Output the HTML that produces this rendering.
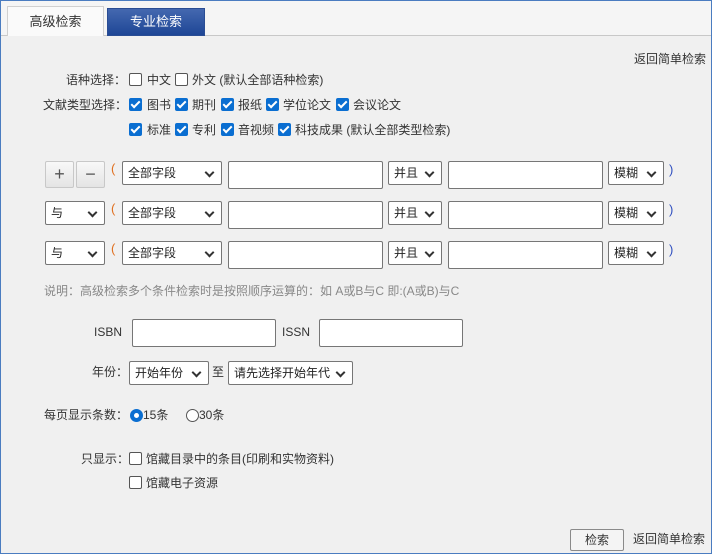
<!DOCTYPE html>
<html><head><meta charset="utf-8"><style>
*{box-sizing:border-box;margin:0;padding:0}
body{width:712px;height:554px;overflow:hidden;background:#fff;font-family:"Liberation Sans","Noto Sans CJK SC",sans-serif;font-size:12px;color:#333}
#f{position:absolute;left:0;top:0;width:712px;height:554px;background:#f0f0f0}
#bd{position:absolute;left:0;top:0;width:712px;height:554px;border:1px solid #4a7cc0;z-index:5;pointer-events:none}
#hd{position:absolute;left:0;top:0;width:712px;height:36px;background:#f5f5f5;border-bottom:1px solid #c8c8c8}
.a{position:absolute;white-space:nowrap;line-height:14px}
.t1{position:absolute;left:7px;top:6px;width:97px;height:30px;background:#fafafa;border:1px solid #d0d0d0;border-bottom:none;text-align:center;line-height:30px;font-size:13px;color:#333}
.t2{position:absolute;left:107px;top:8px;width:98px;height:28px;background:linear-gradient(#4468b0,#1e4696);border:1px solid #2a4d94;text-align:center;line-height:26px;font-size:13px;color:#fff}
.cb{position:absolute;width:13px;height:13px;border:1px solid #555;border-radius:2px;background:#fff}
.ck{position:absolute;width:13px;height:13px;border-radius:2px;background:#0a6ed1}
.ck:after{content:"";position:absolute;left:4px;top:1px;width:3px;height:7px;border:solid #fff;border-width:0 2px 2px 0;transform:rotate(45deg)}
.sel{position:absolute;height:24px;border:1px solid #767676;border-radius:2px;background:#fff;padding-left:5px;line-height:22px;font-size:12px;color:#222}
.sel:after{content:"";position:absolute;right:8px;top:7px;width:5px;height:5px;border:solid #333;border-width:0 2px 2px 0;transform:rotate(45deg)}
.in{position:absolute;height:28px;border:1px solid #767676;border-radius:2px;background:#fff}
.btn{position:absolute;width:29px;height:27px;border:1px solid #c8c8c8;border-radius:2px;background:linear-gradient(#f8f8f8,#e4e4e4);text-align:center;line-height:25px;font-size:18px;color:#555}
.po{position:absolute;color:#e07020;font-size:13px}
.pc{position:absolute;color:#3050c0;font-size:13px}
.rd{position:absolute;width:13px;height:13px;border:1px solid #555;border-radius:50%;background:#fff}
</style></head><body><div id="f">
<div id="hd"></div><div id="bd"></div>
<div class="t1">高级检索</div><div class="t2">专业检索</div>
<div class="a" style="right:6px;top:52px">返回简单检索</div>

<div class="a" style="left:66px;top:73px">语种选择：</div>
<div class="cb" style="left:129px;top:73px"></div><div class="a" style="left:147px;top:73px">中文</div>
<div class="cb" style="left:175px;top:73px"></div><div class="a" style="left:192px;top:73px">外文 (默认全部语种检索)</div>

<div class="a" style="left:43px;top:98px">文献类型选择：</div>
<div class="ck" style="left:129px;top:98px"></div><div class="a" style="left:147px;top:98px">图书</div>
<div class="ck" style="left:175px;top:98px"></div><div class="a" style="left:192px;top:98px">期刊</div>
<div class="ck" style="left:221px;top:98px"></div><div class="a" style="left:238px;top:98px">报纸</div>
<div class="ck" style="left:266px;top:98px"></div><div class="a" style="left:283px;top:98px">学位论文</div>
<div class="ck" style="left:336px;top:98px"></div><div class="a" style="left:353px;top:98px">会议论文</div>

<div class="ck" style="left:129px;top:123px"></div><div class="a" style="left:147px;top:123px">标准</div>
<div class="ck" style="left:175px;top:123px"></div><div class="a" style="left:192px;top:123px">专利</div>
<div class="ck" style="left:221px;top:123px"></div><div class="a" style="left:238px;top:123px">音视频</div>
<div class="ck" style="left:278px;top:123px"></div><div class="a" style="left:295px;top:123px">科技成果 (默认全部类型检索)</div>

<div class="btn" style="left:45px;top:161px">+</div><div class="btn" style="left:76px;top:161px">−</div>
<div class="sel" style="left:45px;top:201px;width:60px">与</div>
<div class="sel" style="left:45px;top:241px;width:60px">与</div>

<div class="po" style="left:111px;top:161px">(</div><div class="po" style="left:111px;top:201px">(</div><div class="po" style="left:111px;top:241px">(</div>
<div class="sel" style="left:122px;top:161px;width:100px">全部字段</div>
<div class="sel" style="left:122px;top:201px;width:100px">全部字段</div>
<div class="sel" style="left:122px;top:241px;width:100px">全部字段</div>
<div class="in" style="left:228px;top:161px;width:155px"></div>
<div class="in" style="left:228px;top:201px;width:155px"></div>
<div class="in" style="left:228px;top:241px;width:155px"></div>
<div class="sel" style="left:388px;top:161px;width:54px">并且</div>
<div class="sel" style="left:388px;top:201px;width:54px">并且</div>
<div class="sel" style="left:388px;top:241px;width:54px">并且</div>
<div class="in" style="left:448px;top:161px;width:155px"></div>
<div class="in" style="left:448px;top:201px;width:155px"></div>
<div class="in" style="left:448px;top:241px;width:155px"></div>
<div class="sel" style="left:608px;top:161px;width:56px">模糊</div>
<div class="sel" style="left:608px;top:201px;width:56px">模糊</div>
<div class="sel" style="left:608px;top:241px;width:56px">模糊</div>
<div class="pc" style="left:669px;top:162px">)</div><div class="pc" style="left:669px;top:202px">)</div><div class="pc" style="left:669px;top:242px">)</div>

<div class="a" style="left:44px;top:284px;color:#888">说明：高级检索多个条件检索时是按照顺序运算的：如 A或B与C 即:(A或B)与C</div>

<div class="a" style="left:94px;top:325px">ISBN</div>
<div class="in" style="left:132px;top:319px;width:144px"></div>
<div class="a" style="left:282px;top:325px">ISSN</div>
<div class="in" style="left:319px;top:319px;width:144px"></div>

<div class="a" style="left:92px;top:365px">年份：</div>
<div class="sel" style="left:129px;top:361px;width:80px">开始年份</div>
<div class="a" style="left:212px;top:365px">至</div>
<div class="sel" style="left:228px;top:361px;width:125px">请先选择开始年代</div>

<div class="a" style="left:44px;top:408px">每页显示条数：</div>
<div class="rd" style="left:130px;top:409px;border:4px solid #0a6ed1"></div><div class="a" style="left:143px;top:408px">15条</div>
<div class="rd" style="left:186px;top:409px"></div><div class="a" style="left:199px;top:408px">30条</div>

<div class="a" style="left:81px;top:452px">只显示：</div>
<div class="cb" style="left:129px;top:452px"></div><div class="a" style="left:146px;top:452px">馆藏目录中的条目(印刷和实物资料)</div>
<div class="cb" style="left:129px;top:476px"></div><div class="a" style="left:146px;top:476px">馆藏电子资源</div>

<div class="a" style="left:570px;top:529px;width:54px;height:22px;border:1px solid #8a8a8a;border-radius:2px;background:#f4f4f4;text-align:center;line-height:20px">检索</div>
<div class="a" style="left:633px;top:532px">返回简单检索</div>
</div></body></html>
